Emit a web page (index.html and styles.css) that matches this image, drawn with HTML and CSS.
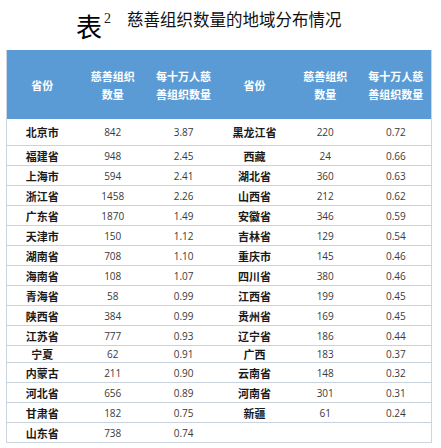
FILE: index.html
```html
<!DOCTYPE html>
<html lang="zh">
<head>
<meta charset="utf-8">
<link rel="stylesheet" href="styles.css">
</head>
<body>
<div class="title">
  <span class="biao">表</span><sup class="num">2</sup><span class="caption">慈善组织数量的地域分布情况</span>
</div>
<table class="tbl">
  <thead>
    <tr>
      <th>省份</th><th>慈善组织<br>数量</th><th>每十万人慈<br>善组织数量</th>
      <th>省份</th><th>慈善组织<br>数量</th><th>每十万人慈<br>善组织数量</th>
    </tr>
  </thead>
  <tbody>
    <tr class="first"><td class="p">北京市</td><td>842</td><td>3.87</td><td class="p">黑龙江省</td><td>220</td><td>0.72</td></tr>
    <tr><td class="p">福建省</td><td>948</td><td>2.45</td><td class="p">西藏</td><td>24</td><td>0.66</td></tr>
    <tr><td class="p">上海市</td><td>594</td><td>2.41</td><td class="p">湖北省</td><td>360</td><td>0.63</td></tr>
    <tr><td class="p">浙江省</td><td>1458</td><td>2.26</td><td class="p">山西省</td><td>212</td><td>0.62</td></tr>
    <tr><td class="p">广东省</td><td>1870</td><td>1.49</td><td class="p">安徽省</td><td>346</td><td>0.59</td></tr>
    <tr><td class="p">天津市</td><td>150</td><td>1.12</td><td class="p">吉林省</td><td>129</td><td>0.54</td></tr>
    <tr><td class="p">湖南省</td><td>708</td><td>1.10</td><td class="p">重庆市</td><td>145</td><td>0.46</td></tr>
    <tr><td class="p">海南省</td><td>108</td><td>1.07</td><td class="p">四川省</td><td>380</td><td>0.46</td></tr>
    <tr><td class="p">青海省</td><td>58</td><td>0.99</td><td class="p">江西省</td><td>199</td><td>0.45</td></tr>
    <tr><td class="p">陕西省</td><td>384</td><td>0.99</td><td class="p">贵州省</td><td>169</td><td>0.45</td></tr>
    <tr><td class="p">江苏省</td><td>777</td><td>0.93</td><td class="p">辽宁省</td><td>186</td><td>0.44</td></tr>
    <tr class="short"><td class="p">宁夏</td><td>62</td><td>0.91</td><td class="p">广西</td><td>183</td><td>0.37</td></tr>
    <tr><td class="p">内蒙古</td><td>211</td><td>0.90</td><td class="p">云南省</td><td>148</td><td>0.32</td></tr>
    <tr><td class="p">河北省</td><td>656</td><td>0.89</td><td class="p">河南省</td><td>301</td><td>0.31</td></tr>
    <tr><td class="p">甘肃省</td><td>182</td><td>0.75</td><td class="p">新疆</td><td>61</td><td>0.24</td></tr>
    <tr><td class="p">山东省</td><td>738</td><td>0.74</td><td class="p"></td><td></td><td></td></tr>
  </tbody>
</table>
</body>
</html>
```
FILE: styles.css
```css
html, body {
  margin: 0;
  padding: 0;
  background: #ffffff;
}
body {
  width: 441px;
  height: 448px;
  overflow: hidden;
  font-family: "Noto Sans CJK SC", "Noto Sans", sans-serif;
}
.title {
  height: 50px;
  display: flex;
  align-items: flex-start;
  padding-left: 76px;
  box-sizing: border-box;
  color: #111;
}
.biao {
  font-size: 26px;
  line-height: 26px;
  margin-top: 13px;
  font-weight: 400;
  color: #000;
}
.num {
  font-family: "Liberation Serif", serif;
  font-size: 14px;
  line-height: 14px;
  margin-top: 12px;
  margin-left: 2px;
  color: #222;
  vertical-align: baseline;
}
.caption {
  font-size: 16.5px;
  line-height: 18px;
  margin-top: 10px;
  margin-left: 16px;
  color: #111;
}
.tbl {
  margin-left: 6px;
  width: 426px;
  border-collapse: collapse;
  table-layout: fixed;
  border-left: 1px solid #cdd6e0;
  border-right: 1px solid #cdd6e0;
  border-bottom: 1px solid #cdd6e0;
}
.tbl th {
  background: #5b9bd5;
  color: #ffffff;
  font-size: 11px;
  font-weight: 700;
  line-height: 18px;
  height: 69px;
  padding: 0;
  text-align: center;
  vertical-align: middle;
}
.tbl td {
  height: 19px;
  padding: 0;
  text-align: center;
  vertical-align: middle;
  border-top: 1px solid #c9d3de;
  font-family: "Open Sans", "Noto Sans", sans-serif;
  font-size: 10px;
  color: #3a3a3a;
  line-height: 14px;
}
.tbl tr.first td {
  height: 26px;
  border-top: none;
}
.tbl tr.short td {
  height: 16px;
}
.tbl td.p {
  font-family: "Noto Sans CJK SC", sans-serif;
  font-weight: 700;
  font-size: 11px;
  color: #1a1a1a;
}
```
